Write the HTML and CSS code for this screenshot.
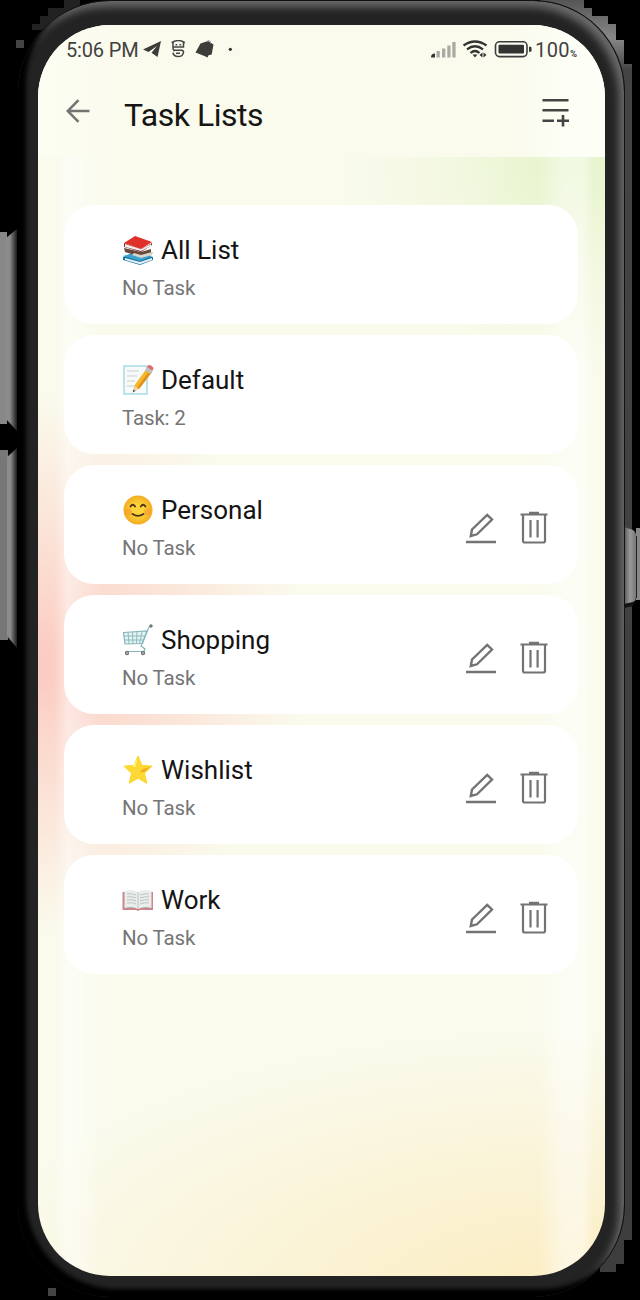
FILE: index.html
```html
<!DOCTYPE html>
<html lang="en">
<head>
<meta charset="utf-8">
<title>Task Lists</title>
<link rel="stylesheet" href="styles.css">
</head>
<body>
<svg class="hardware" viewBox="0 0 640 1300" aria-hidden="true">
  <defs>
    <linearGradient id="bevelL"><stop offset="0" stop-color="#8d8d8d"/><stop offset=".35" stop-color="#8a8a8a"/><stop offset="1" stop-color="#1b1b1b"/></linearGradient>
    <linearGradient id="bevelR"><stop offset="0" stop-color="#555"/><stop offset=".5" stop-color="#999"/><stop offset="1" stop-color="#777"/></linearGradient>
    <linearGradient id="edge" x2="0" y2="1"><stop offset="0" stop-color="#555"/><stop offset=".03" stop-color="#888"/><stop offset=".055" stop-color="#444"/><stop offset="1" stop-color="#3d3d3d"/></linearGradient>
  </defs>
  <path fill="url(#edge)" d="M540 0h44v8h8v8h16v8h8v16h8v24h8v1176h-8v24h-8v8h-16v-30H540z"/>
  <path fill="#444" d="M16 40h8v8h-8zM48 1288h8v8h-8z"/>
  <path fill="#222" d="M48 8h16V0h16v30H32v-6h8v-8h8z"/>
  <path fill="#888" d="M0 232h7v192H0z"/>
  <path fill="#777" d="M0 450h8v190H0z"/>
  <path fill="url(#bevelL)" d="M6 238l11-9v202l-11-12z"/>
  <path fill="url(#bevelL)" d="M7 457l10-9v200l-10-12z"/>
  <path fill="#888" d="M636 528h4v72h-4z"/>
  <path fill="url(#bevelR)" d="M624 527l9 3q3 2 3 6v61q0 4-3 7l-9 4z"/>
  <path fill="#111" d="M624 608v-4l9-2 3-2-3 6z"/>
  <path stroke="#222" d="M636.500 536v62"/>
</svg>

<svg class="sprites" aria-hidden="true">
  <symbol id="edit" viewBox="0 0 32 34"><path fill="none" stroke="#737373" stroke-width="2.400" d="M1 31h30M5.800 25l1.200-6.500L22.200 3.800l4.800 4.700L12 23.300z"/></symbol>
  <symbol id="trash" viewBox="0 0 28 34"><path fill="none" stroke="#737373" stroke-width="2.200" d="M.5 3.500h27M9 1.800h10M3 3.500v26.300q0 1.700 1.700 1.700h18.600q1.700 0 1.700-1.700V3.500M10.500 9v17.500M17.600 9v17.500"/></symbol>
</svg>

<div class="phone">
  <div class="screen">
    <header class="top">
      <div class="status">
        <span class="time">5:06 PM</span>
        <svg class="notices" width="94" height="20" viewBox="0 0 94 20">
          <path fill="#3c3c3a" d="M0 9.500L18 1l-3.500 16-6-4.200L14 6 5.500 12z"/>
          <g fill="none" stroke="#444" stroke-width="1.500"><path d="M30 2q5.500-3 10.500 0v5H30zM30 7v1.500q0 1.700 2 1.700h6.500q2 0 2 2-.3 4.300-5.500 4.300-4.600 0-5-3.800M30 10.500h2M40.500 4l1-2.500M30 4l-1-2.500"/></g>
          <path fill="#444" d="M32.500 4h1.700v1.400h-1.700zM36.500 4h1.700v1.400h-1.700zM33 12.500h4v1.400h-4z"/>
          <path fill="#3c3c3a" d="M57.500 3.500L65 1l5.500 3.500-1.800 10-3.200.8-1 2.200-2.500-1.200L52.500 12.500z"/>
          <path fill="none" stroke="#999" d="M64 1.500q1.500-2 3.500 0v2"/>
          <circle cx="87.300" cy="9.300" r="1.600" fill="#333"/>
        </svg>
        <svg class="signals" width="101" height="20" viewBox="0 0 101 20">
          <path fill="#aaaaa3" d="M5.500 11h3.300v6.500H5.500zM11 8.500h3.300v9H11zM16.300 5.500h3.200v12h-3.200zM21.300 2h3.300v15.500h-3.300z"/><path fill="#333" d="M0 17.500q0-4 4-4v4z"/>
          <g fill="none" stroke="#333" stroke-width="2.300"><path d="M32.500 5.500q11.500-8 23 0M36 9.300q8-6 16 0M39.500 13q4.500-4 9 0"/></g>
          <path fill="#333" d="M41.500 14.500h5L44 17.500zM51.500 12.500v5l-3-2.500zM52.500 12.500v5l3-2.500z"/>
          <rect x="64.500" y="1.800" width="31.500" height="14.800" rx="4" fill="none" stroke="#3c3c3c" stroke-width="1.600"/><rect x="67.500" y="4.800" width="25.500" height="8.800" rx="1" fill="#333"/><path fill="#333" d="M98 6.800h1.500q1 0 1 1v3q0 1-1 1H98z"/>
        </svg>
        <span class="percent">100<small>%</small></span>
      </div>
      <div class="bar">
        <svg class="back" width="24" height="24" viewBox="0 0 24 24" fill="none" stroke="#747472" stroke-width="2.500"><path d="M23.500 12H2M12.500 1.200L1.700 12l10.800 10.800"/></svg>
        <h1>Task Lists</h1>
        <svg class="add" width="28" height="29" viewBox="0 0 28 29" fill="none" stroke="#444" stroke-width="2.600"><path d="M.5 2.300h26M.5 12.300h26M.5 22.800H12M15 22.800h12M21 17v11.500"/></svg>
      </div>
    </header>

    <main class="lists">
      <section class="card">
        <div class="info">
          <h2><svg class="emoji" viewBox="0 0 32 32"><path fill="#1976a8" d="M1 23l12-5 18 5v3l-13 5L1 26z"/><path fill="#e9eef0" d="M3 24l15 4 12-4v2l-12 4.200L3 26z"/><path fill="#39a2cf" d="M1 22l15-4 14 4-12 5z"/><path fill="#67483a" d="M2 14l17 4 10-3v3l2 1-12 4L3 18z"/><path fill="#d9d4c9" d="M12 19l7 2 11-3v3l-11 3-9-3z"/><path fill="#8e2420" d="M2 9l17 6 11-6v2l-11 7L2 13z"/><path fill="#eee" d="M3 10l16 5 10-5v2l-10 5L3 13z"/><path fill="#df3029" d="M2 9L13 2l17 6-11 7z"/></svg>All List</h2>
          <p>No Task</p>
        </div>
      </section>
      <section class="card">
        <div class="info">
          <h2><svg class="emoji" viewBox="0 0 32 32"><path fill="#f8fafa" stroke="#a8dce3" stroke-width="1.500" d="M2 2h23v28H2z"/><path stroke="#c7ced0" d="M5 7h12M5 12h10M5 17h8M5 22h7"/><path fill="#f5b72a" d="M12 22L25 4l5 4-13 17z"/><path fill="#e0901c" d="M15 24L28 6l2 2-13 17z"/><path fill="#efd19c" d="M12 22l5 3-6 3z"/><path fill="#555" d="M11.500 25.500l2 1.500-3 1.500z"/><path fill="#b5c4ca" d="M23 6l2-3 5.500 4-2 3z"/><path fill="#df6a70" d="M25 3l1.500-2q3-.5 5 3L30.500 7z"/></svg>Default</h2>
          <p>Task: 2</p>
        </div>
      </section>
      <section class="card">
        <div class="info">
          <h2><svg class="emoji" viewBox="0 0 32 32"><defs><radialGradient id="face"><stop offset=".4" stop-color="#fdd33b"/><stop offset="1" stop-color="#f2ac20"/></radialGradient></defs><circle cx="16" cy="16" r="14.500" fill="url(#face)"/><circle cx="6.500" cy="18" r="3.500" fill="#f58a35" opacity=".4"/><circle cx="25.500" cy="18" r="3.500" fill="#f58a35" opacity=".4"/><path fill="none" stroke="#50351d" stroke-width="1.800" stroke-linecap="round" d="M8.500 12.500q2.300-3.500 4.600 0M18.800 12.500q2.300-3.500 4.600 0M10.500 20q5.500 3.800 11 0"/></svg>Personal</h2>
          <p>No Task</p>
        </div>
        <div class="actions"><svg class="edit"><use href="#edit"/></svg><svg class="trash"><use href="#trash"/></svg></div>
      </section>
      <section class="card">
        <div class="info">
          <h2><svg class="emoji" viewBox="0 0 32 32"><g fill="none" stroke="#86b5b9" stroke-width="1.200"><path fill="#e3f3f3" d="M1.500 8.500L25 7l-4.500 12.500L3 20z"/><path stroke-width=".9" d="M6 8l1 12M10.500 8l.5 12M15 8l-.5 12M20 7.500L17.500 20M2 12h21M2.500 16h19"/><path d="M30 2h-2.500L19 22l4 3-1 2.500H4"/></g><circle cx="29" cy="2" r="1.700" fill="#777"/><circle cx="5" cy="29" r="2.200" fill="#777"/><circle cx="21" cy="29" r="2.200" fill="#777"/><circle cx="5" cy="29" r=".8" fill="#ddd"/><circle cx="21" cy="29" r=".8" fill="#ddd"/></svg>Shopping</h2>
          <p>No Task</p>
        </div>
        <div class="actions"><svg class="edit"><use href="#edit"/></svg><svg class="trash"><use href="#trash"/></svg></div>
      </section>
      <section class="card">
        <div class="info">
          <h2><svg class="emoji" viewBox="0 0 32 32"><path fill="#fdd835" stroke="#fdd835" stroke-width="1.500" stroke-linejoin="round" d="M16 2.500l3.800 9 9.700.8-7.300 6.700 2.300 9.800L16 23.800l-8.500 5L9.800 19l-7.300-6.700 9.700-.8z"/><path fill="#f3a51e" d="M29 12.500L19.500 16l-1 2.500 4-1z"/><path fill="#fff176" d="M15.500 4l-2 9-3-.2z"/></svg>Wishlist</h2>
          <p>No Task</p>
        </div>
        <div class="actions"><svg class="edit"><use href="#edit"/></svg><svg class="trash"><use href="#trash"/></svg></div>
      </section>
      <section class="card">
        <div class="info">
          <h2><svg class="emoji" viewBox="0 0 32 32"><path fill="#cb858b" d="M.5 8H31v18H18l-2 1-2-1H.5z"/><path fill="#8d9595" d="M2.500 24h12l1.500 2 1.500-2h12v-2h-27z"/><path fill="#e9eeec" d="M2.500 7q8-2.500 13.500 1 5-3.500 13.500-1v17q-8-2-13.500 1-5-3-13.500-1z"/><path fill="none" stroke="#b5beba" stroke-width=".9" d="M16 8v17M5 10q5-1 9 1M5 13q5-1 9 1M5 16q5-1 9 1M5 19q5-1 9 1M18 11q5-2 9-1M18 14q5-2 9-1M18 17q5-2 9-1M18 20q5-2 9-1"/></svg>Work</h2>
          <p>No Task</p>
        </div>
        <div class="actions"><svg class="edit"><use href="#edit"/></svg><svg class="trash"><use href="#trash"/></svg></div>
      </section>
    </main>
  </div>
</div>
</body>
</html>
```

FILE: styles.css
```css
* { box-sizing: border-box; }

body {
  margin: 0;
  height: 1300px;
  overflow: hidden;
  position: relative;
  background: #000;
  font-family: Roboto, "Liberation Sans", sans-serif;
}

.hardware {
  position: absolute;
  inset: 0;
  width: 640px;
  height: 1300px;
}

.sprites {
  position: absolute;
  width: 0;
  height: 0;
}

.phone {
  position: relative;
  width: 607px;
  height: 1297px;
  padding: 24px 19.5px 21px 20px;
  margin-left: 18px;
  border: solid #111;
  border-width: 1px 1px 0 0;
  border-radius: 92px;
  background: #232323;
  box-shadow: inset 8px -8px 4px #000, inset -5px 6px 8px #6c6c6c;
}

.screen {
  height: 1251px;
  border-radius: 72px;
  overflow: hidden;
  background:
    linear-gradient(90deg, transparent 16px, rgba(255, 255, 255, .45) 30px, transparent 65px),
    linear-gradient(90deg, transparent 500px, rgba(255, 255, 255, .45) 525px, rgba(255, 255, 255, .45) 545px, transparent 556px),
    radial-gradient(ellipse 270px 270px at 0 640px, #fbcac1 0, rgba(252, 215, 204, .8) 40%, rgba(252, 235, 225, 0) 100%),
    radial-gradient(ellipse 230px 210px at 530px 140px, #e5f4ca 0, rgba(238, 246, 216, .6) 50%, rgba(250, 251, 236, 0) 100%),
    radial-gradient(ellipse 620px 270px at 95% 102%, #fcedc0 0, rgba(250, 241, 209, .8) 50%, rgba(250, 251, 236, 0) 100%),
    #fafbed;
}

.top {
  height: 132px;
  background: linear-gradient(90deg, #fdfef3, #fafbed 80px, #fafbed 470px, #fdfef6 540px);
}

.status {
  display: flex;
  align-items: center;
  height: 50px;
  padding-left: 28px;
  color: #41413f;
}

.time {
  width: 77px;
  font-size: 20px;
  letter-spacing: -.15px;
}

.signals { margin-left: 194px; }

.percent {
  margin-left: 3px;
  font-size: 20px;
  letter-spacing: .4px;
}

.percent small { font-size: 9.500px; font-weight: 700; letter-spacing: 0; }

.bar {
  display: flex;
  align-items: center;
  height: 72px;
  padding: 0 35px 0 27.5px;
}

h1 {
  flex: 1;
  margin: 7px 0 0 34.500px;
  color: #151513;
  font-size: 32px;
  font-weight: 400;
  letter-spacing: -.5px;
  line-height: 40px;
}

.add { margin-top: 3px; }

.lists {
  display: grid;
  gap: 11.5px;
  padding: 48px 26.5px 0 26px;
}

.card {
  display: flex;
  align-items: flex-start;
  justify-content: space-between;
  height: 118.5px;
  padding: 24.5px 30px 0 58px;
  border-radius: 30px;
  background: #fff;
}

h2 {
  display: flex;
  align-items: center;
  gap: 7px;
  margin: 0;
  color: #141414;
  font-size: 26px;
  font-weight: 400;
  line-height: 40px;
}

.emoji { width: 32px; height: 32px; }

p {
  margin: .5px 0 0;
  color: #757575;
  font-size: 20.5px;
  letter-spacing: -.15px;
  line-height: 36px;
}

.actions {
  display: flex;
  gap: 23px;
  padding-top: 21.5px;
}

.edit { width: 32px; height: 34px; }
.trash { width: 28px; height: 34px; }
```
